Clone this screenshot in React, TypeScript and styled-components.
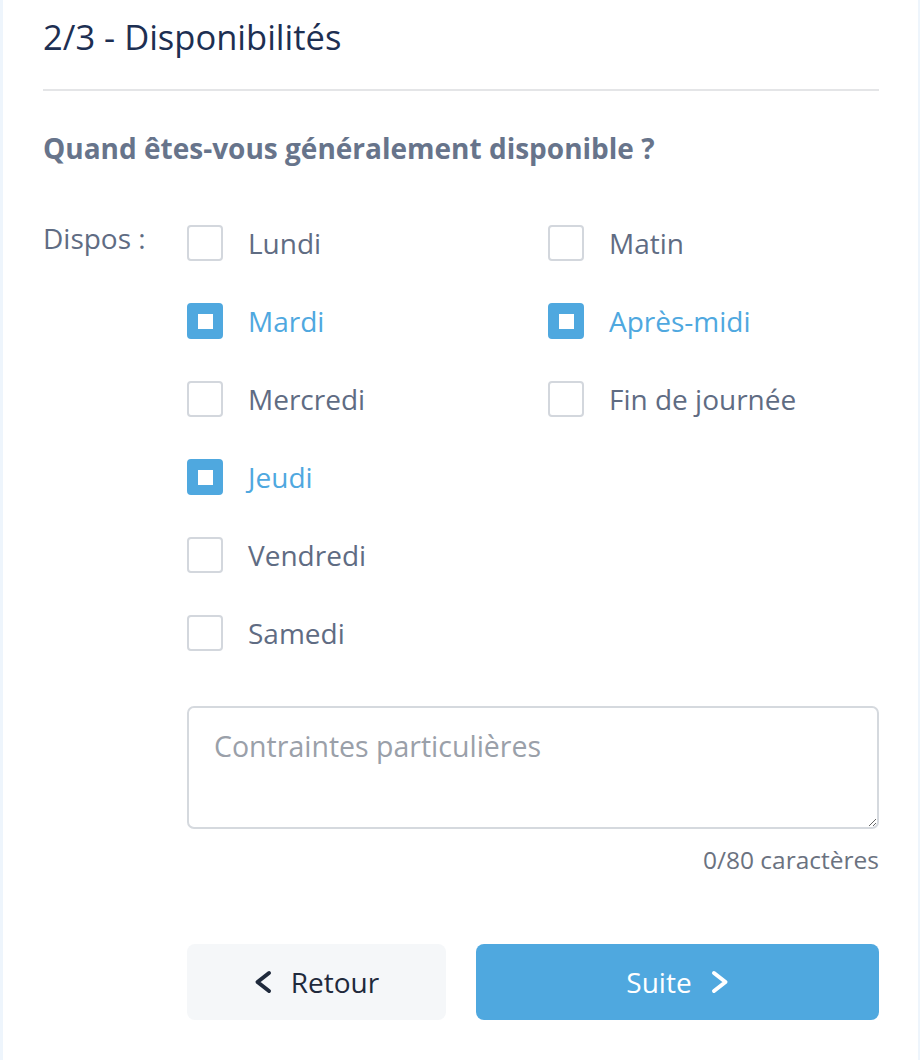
import styled, { createGlobalStyle } from 'styled-components';

const GlobalStyle = createGlobalStyle`
  html, body {
    margin: 0;
    padding: 0;
    background: #eef5fc;
  }
  body {
    font-family: 'Open Sans', 'Noto Sans', sans-serif;
  }
`;

const Card = styled.div`
  margin: 0 2px 0 3px;
  min-height: 1060px;
  background: #ffffff;
  padding: 0 39px 0 40px;
  box-sizing: border-box;
`;

const Header = styled.div`
  padding: 14px 0 29px;
  border-bottom: 2px solid #e4e5e7;
`;

const Title = styled.h1`
  margin: 0;
  font-size: 34.5px;
  line-height: 46px;
  font-weight: 400;
  color: #1d2f52;
`;

const Question = styled.h2`
  margin: 39px 0 0;
  font-size: 28px;
  line-height: 36px;
  font-weight: 700;
  color: #67748b;
`;

const Form = styled.div`
  display: grid;
  grid-template-columns: 144px 1fr;
  margin-top: 38px;
`;

const FieldLabel = styled.div`
  font-size: 28px;
  line-height: 74px;
  color: #5f6c83;
  height: 74px;
  margin-top: -3px;
`;

const Fields = styled.div`
  display: flex;
  flex-direction: column;
`;

const Columns = styled.div`
  display: grid;
  grid-template-columns: 361px 1fr;
`;

const Column = styled.div`
  display: flex;
  flex-direction: column;
`;

const Option = styled.label<{ $checked: boolean }>`
  display: flex;
  align-items: center;
  height: 78px;
  gap: 25px;
  font-size: 28px;
  color: ${(p) => (p.$checked ? '#4fa8df' : '#5f6c83')};
  cursor: pointer;
`;

const Box = styled.span<{ $checked: boolean }>`
  width: 36px;
  height: 36px;
  box-sizing: border-box;
  border-radius: 4px;
  border: 2px solid ${(p) => (p.$checked ? '#4fa8df' : '#d3d7dd')};
  background: ${(p) => (p.$checked ? '#4fa8df' : '#ffffff')};
  display: flex;
  align-items: center;
  justify-content: center;
  flex-shrink: 0;

  &::after {
    content: '';
    display: ${(p) => (p.$checked ? 'block' : 'none')};
    width: 15px;
    height: 15px;
    background: #ffffff;
  }
`;

const TextArea = styled.textarea`
  margin-top: 34px;
  height: 123px;
  box-sizing: border-box;
  border: 2px solid #d5d9de;
  border-radius: 7px;
  padding: 19px 25px;
  font-family: inherit;
  font-size: 28.5px;
  color: #4b5563;
  outline: none;

  &::placeholder {
    color: #9aa0a9;
  }
`;

const Counter = styled.div`
  text-align: right;
  font-size: 24.5px;
  line-height: 32px;
  margin-top: 15px;
  color: #6b7280;
`;

const Actions = styled.div`
  display: grid;
  grid-template-columns: 259px 1fr;
  gap: 30px;
  margin-top: 68px;
`;

const Button = styled.button<{ $primary?: boolean }>`
  height: 76px;
  border: none;
  border-radius: 8px;
  display: flex;
  align-items: center;
  justify-content: center;
  gap: 19px;
  font-family: inherit;
  font-size: 28px;
  background: ${(p) => (p.$primary ? '#4fa8df' : '#f5f7f9')};
  color: ${(p) => (p.$primary ? '#ffffff' : '#1f2a3c')};
  cursor: pointer;
`;

const Chevron = styled.svg`
  width: 18px;
  height: 24px;
  flex-shrink: 0;
`;

function ChevronIcon({ dir }: { dir: 'left' | 'right' }) {
  const points = dir === 'left' ? '15,3 3.5,12 15,21' : '3,3 14.5,12 3,21';
  return (
    <Chevron viewBox="0 0 18 24" fill="none">
      <polyline
        points={points}
        stroke="currentColor"
        strokeWidth={4}
        strokeLinecap="round"
        strokeLinejoin="round"
      />
    </Chevron>
  );
}

const days = [
  { label: 'Lundi', checked: false },
  { label: 'Mardi', checked: true },
  { label: 'Mercredi', checked: false },
  { label: 'Jeudi', checked: true },
  { label: 'Vendredi', checked: false },
  { label: 'Samedi', checked: false },
];

const moments = [
  { label: 'Matin', checked: false },
  { label: 'Après-midi', checked: true },
  { label: 'Fin de journée', checked: false },
];

function Check({ label, checked }: { label: string; checked: boolean }) {
  return (
    <Option $checked={checked}>
      <Box $checked={checked} />
      {label}
    </Option>
  );
}

export default function App() {
  return (
    <>
      <GlobalStyle />
      <Card>
        <Header>
          <Title>2/3 - Disponibilités</Title>
        </Header>
        <Question>Quand êtes-vous généralement disponible ?</Question>
        <Form>
          <FieldLabel>Dispos :</FieldLabel>
          <Fields>
            <Columns>
              <Column>
                {days.map((d) => (
                  <Check key={d.label} {...d} />
                ))}
              </Column>
              <Column>
                {moments.map((m) => (
                  <Check key={m.label} {...m} />
                ))}
              </Column>
            </Columns>
            <TextArea placeholder="Contraintes particulières" />
            <Counter>0/80 caractères</Counter>
            <Actions>
              <Button>
                <ChevronIcon dir="left" />
                Retour
              </Button>
              <Button $primary>
                Suite
                <ChevronIcon dir="right" />
              </Button>
            </Actions>
          </Fields>
        </Form>
      </Card>
    </>
  );
}
